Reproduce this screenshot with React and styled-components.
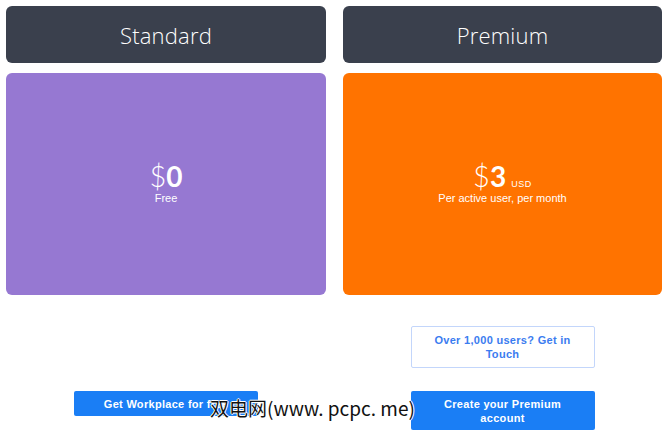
import styled, { createGlobalStyle } from "styled-components";

const GlobalStyle = createGlobalStyle`
    html, body {
        margin: 0;
        padding: 0;
        background: #ffffff;
    }
    * {
        box-sizing: border-box;
    }
`;

const plans = [
    {
        name: "Standard",
        color: "#9678d2",
        price: "0",
        unit: "",
        note: "Free",
        secondary: null,
        primary: "Get Workplace for free",
    },
    {
        name: "Premium",
        color: "#ff7300",
        price: "3",
        unit: "USD",
        note: "Per active user, per month",
        secondary: "Over 1,000 users? Get in Touch",
        primary: "Create your Premium account",
    },
];

function PlanColumn({ plan }) {
    return (
        <Column>
            <PlanHeader>{plan.name}</PlanHeader>
            <PriceCard $color={plan.color}>
                <Price>
                    <Dollar>$</Dollar>
                    <Amount>{plan.price}</Amount>
                    {plan.unit && <Unit>{plan.unit}</Unit>}
                </Price>
                <Note>{plan.note}</Note>
            </PriceCard>
            <Actions>
                <Slot>
                    {plan.secondary && <OutlineButton>{plan.secondary}</OutlineButton>}
                </Slot>
                <PrimaryButton>{plan.primary}</PrimaryButton>
            </Actions>
        </Column>
    );
}

function App() {
    return (
        <>
            <GlobalStyle />
            <Page>
                {plans.map((plan) => (
                    <PlanColumn key={plan.name} plan={plan} />
                ))}
                <Watermark>双电网(www. pcpc. me)</Watermark>
            </Page>
        </>
    );
}

const Page = styled.div`
    position: relative;
    display: grid;
    grid-template-columns: 320px 319px;
    column-gap: 17px;
    padding: 6px 8px 0 6px;
    width: 670px;
    height: 435px;
    overflow: hidden;
`;

const Column = styled.div`
    display: flex;
    flex-direction: column;
`;

const PlanHeader = styled.div`
    height: 57px;
    margin-bottom: 10px;
    border-radius: 6px;
    background: #3a404d;
    color: #ffffff;
    display: flex;
    align-items: center;
    justify-content: center;
    font-family: "Open Sans", "Lato", sans-serif;
    font-weight: 300;
    font-size: 22px;
    letter-spacing: 0.2px;
`;

const PriceCard = styled.div`
    height: 222px;
    border-radius: 6px;
    background: ${(p) => p.$color};
    color: #ffffff;
    display: flex;
    flex-direction: column;
    align-items: center;
    justify-content: center;
    padding-bottom: 2px;
    font-family: "Lato", sans-serif;
`;

const Price = styled.div`
    display: flex;
    align-items: baseline;
    height: 30px;
    line-height: 30px;
    margin-bottom: 1px;
`;

const Dollar = styled.span`
    font-weight: 300;
    font-size: 29px;
`;

const Amount = styled.span`
    font-weight: 700;
    font-size: 28px;
`;

const Unit = styled.span`
    font-size: 9px;
    line-height: 1;
    letter-spacing: 0.6px;
    margin-left: 5px;
    font-family: "Liberation Sans", Arial, sans-serif;
`;

const Note = styled.div`
    font-family: "Liberation Sans", Arial, sans-serif;
    font-size: 11px;
    line-height: 13px;
`;

const Actions = styled.div`
    display: flex;
    flex-direction: column;
    align-items: center;
    gap: 23px;
    padding-top: 31px;
`;

const Slot = styled.div`
    height: 42px;
    width: 184px;
`;

const ButtonBase = styled.button`
    width: 184px;
    border-radius: 2px;
    font-family: "Liberation Sans", Arial, sans-serif;
    font-weight: 700;
    font-size: 11px;
    line-height: 14px;
    letter-spacing: 0.3px;
    text-align: center;
    cursor: pointer;
`;

const OutlineButton = styled(ButtonBase)`
    height: 42px;
    padding: 6px 20px;
    background: #ffffff;
    border: 1px solid #c3d6fb;
    color: #3b7cf0;
`;

const PrimaryButton = styled(ButtonBase)`
    padding: 5.5px 20px;
    background: #1a7ef5;
    border: none;
    color: #ffffff;
`;

const Watermark = styled.div`
    position: absolute;
    left: 210px;
    top: 396px;
    font-family: "Noto Sans CJK SC", "DejaVu Sans", sans-serif;
    font-size: 19px;
    line-height: 24px;
    color: #111111;
    text-shadow: 1px 0 #fff, -1px 0 #fff, 0 1px #fff, 0 -1px #fff;
    pointer-events: none;
`;

export default App;
